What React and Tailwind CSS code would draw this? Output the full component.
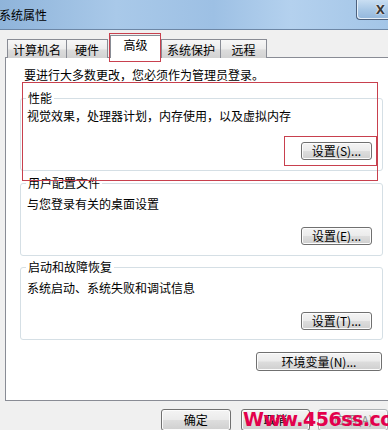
import React from "react";

const font = "font-['Noto_Sans_CJK_SC','Liberation_Sans',sans-serif]";

function WinButton({ children, className = "", disabled = false }) {
  return (
    <div
      className={`flex items-center justify-center rounded-[3px] border ${
        disabled ? "border-[#adb2b5] text-[#8d8d8d]" : "border-[#707070] text-black"
      } bg-[linear-gradient(180deg,#f4f4f4_0%,#ebebeb_48%,#dddddd_52%,#cfcfcf_100%)] shadow-[inset_0_0_0_1px_#fcfcfc] text-[12px] leading-[14px] ${className}`}
    >
      {children}
    </div>
  );
}

function Tab({ label, className = "" }) {
  return (
    <div
      className={`h-[19px] flex items-center justify-center border border-b-0 border-[#898c95] bg-[linear-gradient(180deg,#f7f7f7_0%,#ececec_50%,#dcdcdc_55%,#d2d2d2_100%)] text-[12px] leading-[14px] text-black ${className}`}
    >
      {label}
    </div>
  );
}

function Group({ title, desc, btn, className = "", descMt, btnMt, pb }) {
  return (
    <fieldset
      className={`w-[363px] ml-[14px] border border-[#d5dfe5] rounded-[3px] ${className}`}
    >
      <legend className="ml-[5px] px-[2px] text-[12px] leading-[14px] text-black">
        {title}
      </legend>
      <div className={`pl-[6px] text-[12px] leading-[14px] text-black ${descMt}`}>{desc}</div>
      <div className={`flex justify-end pr-[10px] ${btnMt} ${pb}`}>
        <WinButton className="w-[71px] h-[18px]">{btn}</WinButton>
      </div>
    </fieldset>
  );
}

export default function App() {
  return (
    <div className={`relative w-[388px] h-[430px] overflow-hidden bg-[#f0f0f0] flex flex-col ${font}`}>
      {/* Title bar */}
      <div className="h-[30px] shrink-0 flex justify-between items-start border-b border-[#6d87a6] bg-[linear-gradient(90deg,#8fb4da_0%,#a9c9e9_30%,#9dc0e4_55%,#b4d1ee_75%,#a3c5e7_100%)]">
        <div className="pt-[8px] pl-0 -ml-[1px] text-[12px] leading-[14px] text-black">系统属性</div>
        <div className="w-[32px] h-[20px] border-l border-b border-[#4d617d] rounded-bl-[4px] bg-[linear-gradient(180deg,#c9def2_0%,#a9c8e6_50%,#93b7dc_100%)] shadow-[inset_1px_-1px_0_#e6f0fa] flex items-center justify-end pr-[3px]">
          <span className="font-['DejaVu_Sans',sans-serif] font-bold text-[12px] leading-[12px] text-[#3a3a3a] [text-shadow:0_0_2px_#ffffff,0_0_1px_#ffffff]">
            X
          </span>
        </div>
      </div>

      {/* Body */}
      <div className="flex-1 flex flex-col pl-[5px]">
        {/* Tabs */}
        <div className="h-[23px] mt-[5px] -mb-[1px] relative z-10 flex items-end pl-[2px]">
          <Tab label="计算机名" className="w-[60px] pt-[1px]" />
          <Tab label="硬件" className="w-[42px] -ml-[1px] pt-[1px]" />
          <div className="w-[51px] h-[23px] ml-[2px] -mr-[1px] border border-b-0 border-[#898c95] bg-white flex justify-center pt-[2px] text-[12px] leading-[14px] text-black">
            高级
          </div>
          <Tab label="系统保护" className="w-[60px] ml-[1px] pt-[1px]" />
          <Tab label="远程" className="w-[47px] -ml-[1px] pt-[1px]" />
        </div>

        {/* Panel */}
        <div className="w-[400px] h-[344px] shrink-0 border border-[#898c95] bg-white">
          <div className="w-[377px] flex flex-col">
            <div className="mt-[10px] pl-[18px] text-[12px] leading-[14px] text-black">
              要进行大多数更改，您必须作为管理员登录。
            </div>
            <Group
              title="性能"
              desc="视觉效果，处理器计划，内存使用，以及虚拟内存"
              btn="设置(S)..."
              className="mt-[9px]"
              descMt="mt-[4px]"
              btnMt="mt-[19px]"
              pb="pb-[10px]"
            />
            <Group
              title="用户配置文件"
              desc="与您登录有关的桌面设置"
              btn="设置(E)..."
              className="mt-[5px]"
              descMt="mt-[7px]"
              btnMt="mt-[16px]"
              pb="pb-[10px]"
            />
            <Group
              title="启动和故障恢复"
              desc="系统启动、系统失败和调试信息"
              btn="设置(T)..."
              className="mt-[4px]"
              descMt="mt-[7px]"
              btnMt="mt-[17px]"
              pb="pb-[9px]"
            />
            <div className="flex justify-end mt-[12px] pr-[1px]">
              <WinButton className="w-[126px] h-[19px]">环境变量(N)...</WinButton>
            </div>
          </div>
        </div>

        {/* Bottom buttons */}
        <div className="flex mt-[8px] pl-[156px] gap-[10px]">
          <WinButton className="w-[72px] h-[22px]">确定</WinButton>
          <WinButton className="w-[72px] h-[22px]">取消</WinButton>
          <WinButton className="w-[72px] h-[22px] -ml-[2px]" disabled>
            应用(A)
          </WinButton>
        </div>
      </div>

      {/* Red annotation boxes */}
      <div className="absolute left-[109px] top-[33px] w-[52px] h-[29px] border border-[#c8404e] z-20" />
      <div className="absolute left-[22px] top-[82px] w-[356px] h-[99px] border border-[#c8404e] z-20" />
      <div className="absolute left-[284px] top-[136px] w-[93px] h-[30px] border border-[#c8404e] z-20" />

      {/* Watermark */}
      <div className="absolute left-[243px] top-[408px] z-30 font-['DejaVu_Sans',sans-serif] font-bold text-[19px] leading-[22px] tracking-[-0.5px] text-[#e3004c] whitespace-nowrap">
        Www.456ss.com
      </div>
    </div>
  );
}
